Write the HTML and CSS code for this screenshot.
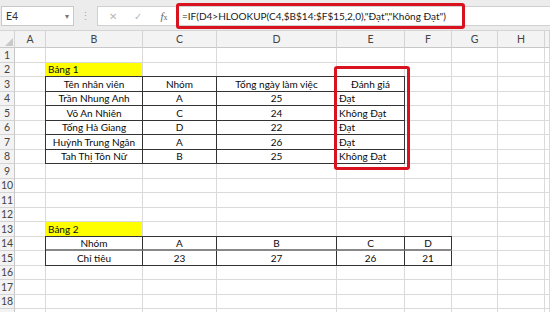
FILE: index.html
```html
<!DOCTYPE html>
<html>
<head>
<meta charset="utf-8">
<link rel="stylesheet" href="styles.css">
</head>
<body>
<div class="app">
  <div class="toolbar">
    <div class="namebox"><span class="nb-text">E4</span><span class="nb-arrow">▾</span></div>
    <div class="sep">⋮</div>
    <div class="fbox">
      <span class="ic ic-x">✕</span>
      <span class="ic ic-ok">✓</span>
      <span class="ic ic-fx"><i>f</i><small>x</small></span>
      <div class="formula">=IF(D4&gt;HLOOKUP(C4,$B$14:$F$15,2,0),"Đạt","Không Đạt")</div>
    </div>
  </div>
  <div class="sheet">
    <div class="row hdr">
      <div class="c rh corner"><span class="tri"></span></div>
      <div class="c ca">A</div><div class="c cb">B</div><div class="c cc">C</div><div class="c cd">D</div><div class="c ce">E</div><div class="c cf">F</div><div class="c cg">G</div><div class="c chh">H</div><div class="c ci"></div>
    </div>
    <div class="row"><div class="c rh">1</div><div class="c ca"></div><div class="c cb"></div><div class="c cc"></div><div class="c cd"></div><div class="c ce"></div><div class="c cf"></div><div class="c cg"></div><div class="c chh"></div><div class="c ci"></div></div>
    <div class="row"><div class="c rh">2</div><div class="c ca"></div><div class="c cb yel l">Bảng 1</div><div class="c cc"></div><div class="c cd"></div><div class="c ce"></div><div class="c cf"></div><div class="c cg"></div><div class="c chh"></div><div class="c ci"></div></div>
    <div class="row"><div class="c rh">3</div><div class="c ca"></div><div class="c cb t tt tl">Tên nhân viên</div><div class="c cc t tt">Nhóm</div><div class="c cd t tt">Tổng ngày làm việc</div><div class="c ce t tt">Đánh giá</div><div class="c cf"></div><div class="c cg"></div><div class="c chh"></div><div class="c ci"></div></div>
    <div class="row"><div class="c rh">4</div><div class="c ca"></div><div class="c cb t tl">Trần Nhung Anh</div><div class="c cc t">A</div><div class="c cd t">25</div><div class="c ce t l">Đạt</div><div class="c cf"></div><div class="c cg"></div><div class="c chh"></div><div class="c ci"></div></div>
    <div class="row"><div class="c rh">5</div><div class="c ca"></div><div class="c cb t tl">Võ An Nhiên</div><div class="c cc t">C</div><div class="c cd t">24</div><div class="c ce t l">Không Đạt</div><div class="c cf"></div><div class="c cg"></div><div class="c chh"></div><div class="c ci"></div></div>
    <div class="row"><div class="c rh">6</div><div class="c ca"></div><div class="c cb t tl">Tống Hà Giang</div><div class="c cc t">D</div><div class="c cd t">22</div><div class="c ce t l">Đạt</div><div class="c cf"></div><div class="c cg"></div><div class="c chh"></div><div class="c ci"></div></div>
    <div class="row"><div class="c rh">7</div><div class="c ca"></div><div class="c cb t tl">Huỳnh Trung Ngân</div><div class="c cc t">A</div><div class="c cd t">26</div><div class="c ce t l">Đạt</div><div class="c cf"></div><div class="c cg"></div><div class="c chh"></div><div class="c ci"></div></div>
    <div class="row"><div class="c rh">8</div><div class="c ca"></div><div class="c cb t tl">Tah Thị Tôn Nữ</div><div class="c cc t">B</div><div class="c cd t">25</div><div class="c ce t l">Không Đạt</div><div class="c cf"></div><div class="c cg"></div><div class="c chh"></div><div class="c ci"></div></div>
    <div class="row"><div class="c rh">9</div><div class="c ca"></div><div class="c cb"></div><div class="c cc"></div><div class="c cd"></div><div class="c ce"></div><div class="c cf"></div><div class="c cg"></div><div class="c chh"></div><div class="c ci"></div></div>
    <div class="row"><div class="c rh">10</div><div class="c ca"></div><div class="c cb"></div><div class="c cc"></div><div class="c cd"></div><div class="c ce"></div><div class="c cf"></div><div class="c cg"></div><div class="c chh"></div><div class="c ci"></div></div>
    <div class="row"><div class="c rh">11</div><div class="c ca"></div><div class="c cb"></div><div class="c cc"></div><div class="c cd"></div><div class="c ce"></div><div class="c cf"></div><div class="c cg"></div><div class="c chh"></div><div class="c ci"></div></div>
    <div class="row"><div class="c rh">12</div><div class="c ca"></div><div class="c cb"></div><div class="c cc"></div><div class="c cd"></div><div class="c ce"></div><div class="c cf"></div><div class="c cg"></div><div class="c chh"></div><div class="c ci"></div></div>
    <div class="row"><div class="c rh">13</div><div class="c ca"></div><div class="c cb yel l">Bảng 2</div><div class="c cc"></div><div class="c cd"></div><div class="c ce"></div><div class="c cf"></div><div class="c cg"></div><div class="c chh"></div><div class="c ci"></div></div>
    <div class="row"><div class="c rh">14</div><div class="c ca"></div><div class="c cb t tt tl dbl">Nhóm</div><div class="c cc t tt dbl">A</div><div class="c cd t tt dbl">B</div><div class="c ce t tt dbl">C</div><div class="c cf t tt dbl">D</div><div class="c cg"></div><div class="c chh"></div><div class="c ci"></div></div>
    <div class="row"><div class="c rh">15</div><div class="c ca"></div><div class="c cb t tl">Chỉ tiêu</div><div class="c cc t">23</div><div class="c cd t">27</div><div class="c ce t">26</div><div class="c cf t">21</div><div class="c cg"></div><div class="c chh"></div><div class="c ci"></div></div>
    <div class="row"><div class="c rh">16</div><div class="c ca"></div><div class="c cb"></div><div class="c cc"></div><div class="c cd"></div><div class="c ce"></div><div class="c cf"></div><div class="c cg"></div><div class="c chh"></div><div class="c ci"></div></div>
    <div class="row"><div class="c rh">17</div><div class="c ca"></div><div class="c cb"></div><div class="c cc"></div><div class="c cd"></div><div class="c ce"></div><div class="c cf"></div><div class="c cg"></div><div class="c chh"></div><div class="c ci"></div></div>
    <div class="row"><div class="c rh">18</div><div class="c ca"></div><div class="c cb"></div><div class="c cc"></div><div class="c cd"></div><div class="c ce"></div><div class="c cf"></div><div class="c cg"></div><div class="c chh"></div><div class="c ci"></div></div>
    <div class="row"><div class="c rh"></div><div class="c ca"></div><div class="c cb"></div><div class="c cc"></div><div class="c cd"></div><div class="c ce"></div><div class="c cf"></div><div class="c cg"></div><div class="c chh"></div><div class="c ci"></div></div>
  </div>
  <div class="mark mark-formula"></div>
  <div class="mark mark-col"></div>
</div>
</body>
</html>
```

FILE: styles.css
```css
* { box-sizing: border-box; }
html, body { margin: 0; padding: 0; background: #fff; }
body { width: 550px; height: 312px; overflow: hidden; font-family: Lato, "Liberation Sans", Arial, sans-serif; }
.app { position: relative; width: 550px; height: 312px; overflow: hidden; }

.toolbar {
  height: 31px;
  background: #ececec;
  display: flex;
  align-items: center;
  padding: 1px 0 0 1px;
  border-bottom: 1px solid #d4d4d4;
}
.namebox {
  width: 73px; height: 20px;
  background: #fff;
  border: 1px solid #c8c8c8;
  display: flex; align-items: center; justify-content: space-between;
  padding: 0 4px 0 4px;
  font-size: 10.5px; color: #333;
}
.nb-arrow { font-size: 8px; color: #777; }
.sep { width: 23px; text-align: center; color: #aaa; font-size: 11px; }
.fbox {
  flex: 1; height: 20px;
  background: #fff;
  border: 1px solid #d0d0d0;
  border-right: none;
  display: flex; align-items: center;
  padding-left: 9px;
}
.ic { color: #b8b8b8; font-size: 10px; text-align: center; }
.ic-x { width: 12px; }
.ic-ok { width: 12px; margin-left: 13px; }
.ic-fx { width: 14px; margin-left: 13px; color: #666; font-family: "Liberation Serif", serif; font-size: 11px; }
.ic-fx small { font-size: 8px; }
.formula { margin-left: 11px; font-size: 10px; color: #1a1a1a; white-space: nowrap; }

.sheet { display: flex; flex-direction: column; }
.row { display: flex; height: 14.5px; }
.row.hdr { height: 17px; }
.c {
  flex: none;
  height: 100%;
  border-right: 1px solid #dadada;
  border-bottom: 1px solid #dadada;
  font-size: 10px;
  color: #0a0a0a;
  display: flex; align-items: center; justify-content: center;
  white-space: nowrap;
  overflow: visible;
  line-height: 1;
}
.hdr .c { background: #f3f3f3; color: #444; border-right-color: #d4d4d4; border-bottom-color: #c8c8c8; font-size: 10.5px; }
.rh { width: 15px; background: #f3f3f3; color: #444; font-size: 10.5px; justify-content: center; border-right-color: #c8c8c8; border-bottom-color: #d4d4d4; }
.corner { position: relative; }
.tri { width: 0; height: 0; border-left: 8px solid transparent; border-bottom: 8px solid #c9c9c9; margin: 6px 0 0 4px; }
.ca { width: 31px; }
.cb { width: 97px; }
.cc { width: 74px; }
.cd { width: 120px; }
.ce { width: 68px; }
.cf { width: 47px; }
.cg { width: 46px; }
.chh { width: 47px; }
.ci { flex: 1; }

.l { justify-content: flex-start; padding-left: 2px; }
.yel { background: #ffff00; }
.t { border-right-color: #333; border-bottom-color: #333; }
.tt { box-shadow: 0 -1px 0 #333; }
.tl { box-shadow: -1px 0 0 #333; }
.tt.tl { box-shadow: 0 -1px 0 #333, -1px 0 0 #333, -1px -1px 0 #333; }
.dbl { border-bottom: 2px solid #888; }

.mark { position: absolute; border: 3px solid #d9121f; border-radius: 3px; }
.mark-formula { left: 176px; top: 3px; width: 289px; height: 26px; }
.mark-col { left: 334px; top: 66px; width: 76px; height: 104px; }
```
